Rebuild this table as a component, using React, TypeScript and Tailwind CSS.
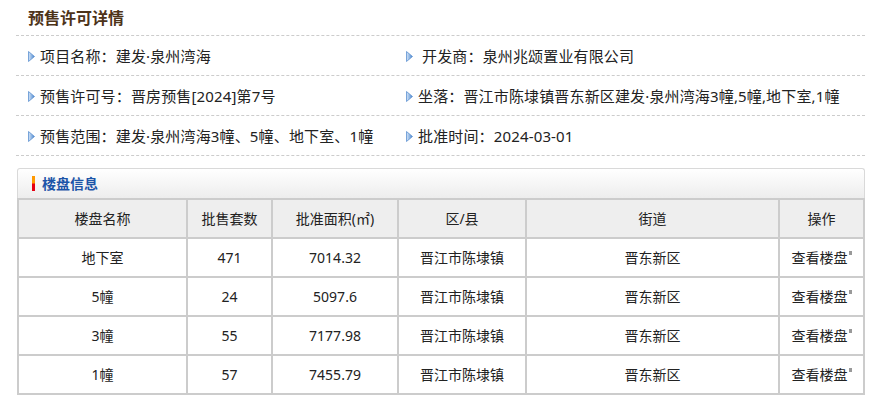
import React from 'react'

const font = { fontFamily: '"Noto Sans", "Noto Sans CJK SC", sans-serif' }

function Arrow() {
  return (
    <svg width="7" height="11" viewBox="0 0 7 11" className="shrink-0">
      <defs>
        <linearGradient id="arw" x1="0" y1="0" x2="1" y2="0">
          <stop offset="0" stopColor="#d6e6f8" />
          <stop offset="1" stopColor="#4a86cf" />
        </linearGradient>
      </defs>
      <polygon points="0.5,0.5 6.5,5.5 0.5,10.5" fill="url(#arw)" stroke="#5b8fd0" strokeWidth="0.8" />
    </svg>
  )
}

const info: [string, string][] = [
  ['项目名称：建发·泉州湾海', '\u00a0开发商：泉州兆颂置业有限公司'],
  ['预售许可号：晋房预售[2024]第7号', '坐落：晋江市陈埭镇晋东新区建发·泉州湾海3幢,5幢,地下室,1幢'],
  ['预售范围：建发·泉州湾海3幢、5幢、地下室、1幢', '批准时间：2024-03-01'],
]

const headers = ['楼盘名称', '批售套数', '批准面积(㎡)', '区/县', '街道', '操作']

const rows = [
  ['地下室', '471', '7014.32'],
  ['5幢', '24', '5097.6'],
  ['3幢', '55', '7177.98'],
  ['1幢', '57', '7455.79'],
]

export default function App() {
  return (
    <div className="w-[876px] h-[410px] bg-white text-[#222]" style={font}>
      <div className="ml-[16px] w-[849px]">
        {/* Title */}
        <div className="h-[36px] border-b border-dashed border-[#cccccc] pl-[12px] flex items-center">
          <h1 className="text-[16px] font-bold text-[#4d3319] leading-none">预售许可详情</h1>
        </div>

        {/* Info rows */}
        {info.map(([left, right], i) => (
          <div
            key={i}
            className="h-[40px] border-b border-dashed border-[#cccccc] pl-[12px] pt-[2px] grid grid-cols-[378px_1fr] items-center text-[15px] tracking-[0.15px]"
          >
            <div className="flex items-center gap-[5px] whitespace-nowrap">
              <Arrow />
              <span>{left}</span>
            </div>
            <div className="flex items-center gap-[5px] whitespace-nowrap">
              <Arrow />
              <span>{right}</span>
            </div>
          </div>
        ))}
      </div>

      {/* Building info */}
      <div className="ml-[17px] mt-[12px] w-[848px]">
        <div className="h-[30px] border border-b-0 border-[#d9d9d9] rounded-t-[3px] bg-gradient-to-b from-white to-[#ededed] flex items-center pl-[14px] gap-[7px]">
          <span className="w-[3px] h-[15px] bg-[linear-gradient(#ff9900_0%,#ff9900_45%,#e60012_55%,#e60012_100%)]" />
          <span className="text-[14px] font-bold text-[#1d55a8]">楼盘信息</span>
        </div>
        <div className="grid grid-cols-[167px_83px_124px_126px_251px_83px] gap-[2px] p-[2px] bg-[#cccccc] text-[14px]">
          {headers.map((h) => (
            <div key={h} className="h-[37px] bg-[#eeeeee] flex items-center justify-center">
              {h}
            </div>
          ))}
          {rows.map((r) => (
            <React.Fragment key={r[0]}>
              <div className="h-[37px] bg-white flex items-center justify-center">{r[0]}</div>
              <div className="h-[37px] bg-white flex items-center justify-center">{r[1]}</div>
              <div className="h-[37px] bg-white flex items-center justify-center">{r[2]}</div>
              <div className="h-[37px] bg-white flex items-center justify-center">晋江市陈埭镇</div>
              <div className="h-[37px] bg-white flex items-center justify-center">晋东新区</div>
              <div className="h-[37px] bg-white flex items-center justify-center">
                <span>查看楼盘</span>
                <span className="w-[3px] h-[4px] bg-[#999] self-start mt-[12px] ml-[1px]" />
              </div>
            </React.Fragment>
          ))}
        </div>
      </div>
    </div>
  )
}
